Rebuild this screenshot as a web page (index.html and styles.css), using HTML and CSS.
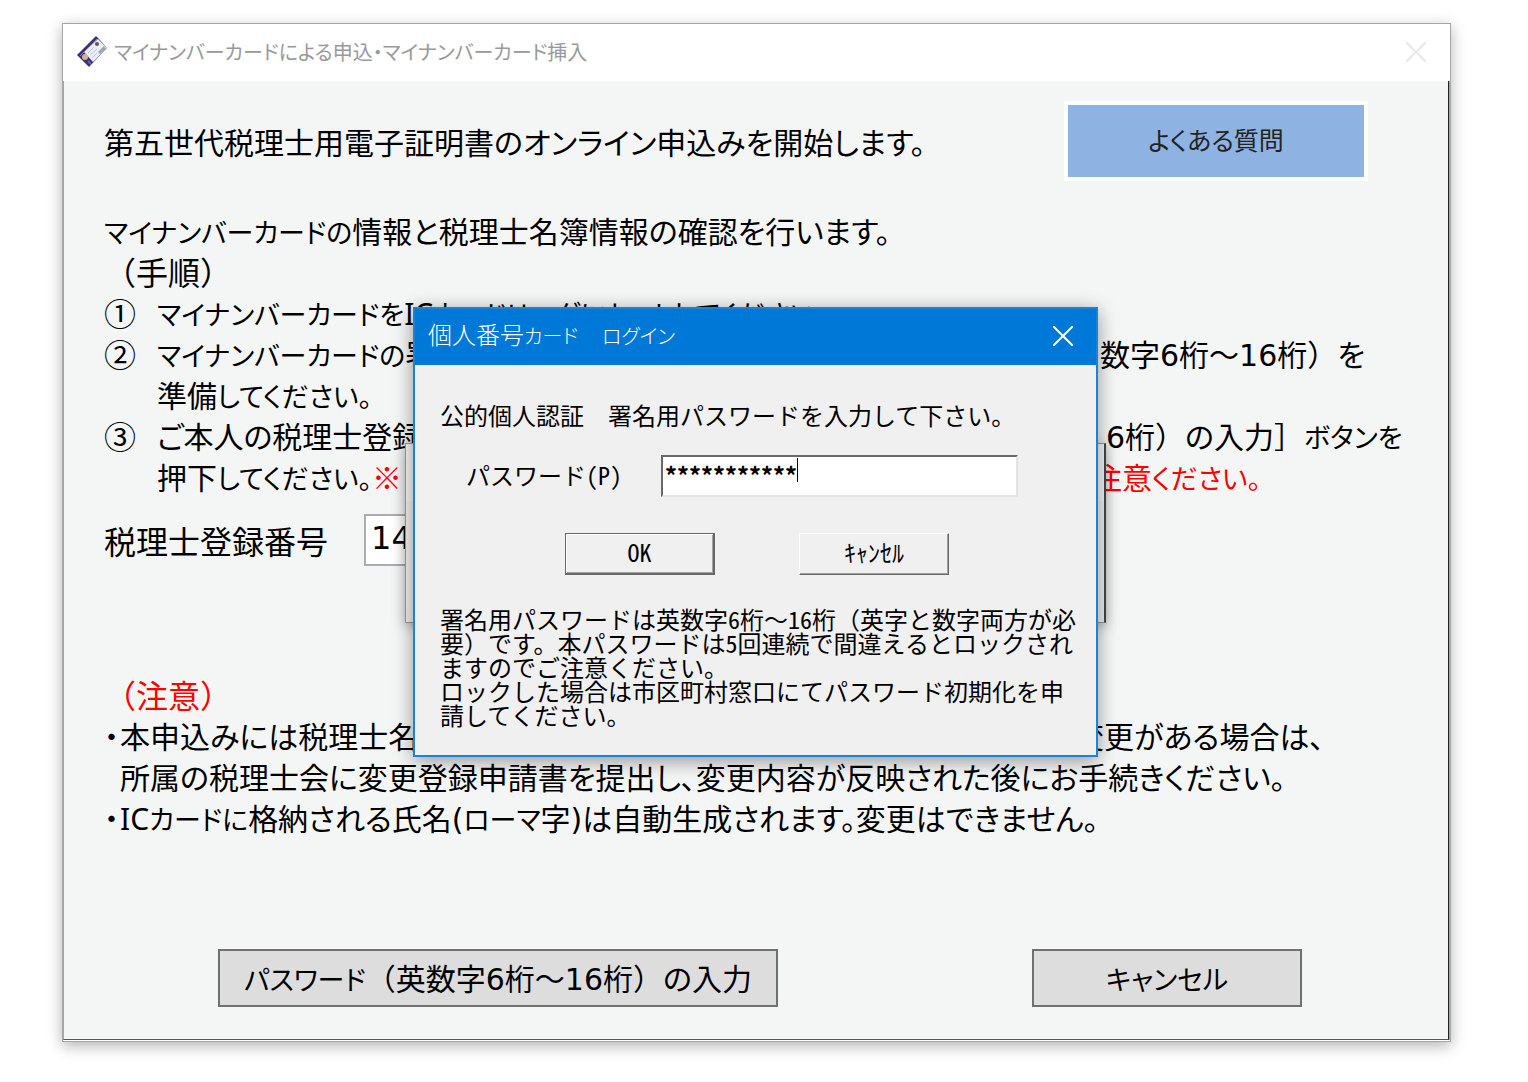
FILE: index.html
```
<!DOCTYPE html>
<html lang="ja">
<head>
    <meta charset="UTF-8">
    <meta name="viewport" content="width=device-width, initial-scale=1.0">
    <title>マイナンバーカードによる申込・マイナンバーカード挿入</title>
    <link rel="stylesheet" href="styles.css">
</head>
<body>
    <div class="window">
        <div class="window-title">
            <svg class="app-icon" width="30" height="32" viewBox="0 0 30 32" aria-hidden="true">
                <path d="M0 19 L19 0 L22 3 L30 12 L12 31 Z" fill="#3c2f7c"/>
                <path d="M7 16 L21 3 L30 12 L16 26 Z" fill="#eaeefa"/>
                <path d="M3 20 L20 3" stroke="#8d84bb" stroke-width="1"/>
                <path d="M11 17 L17 11 M13 19 L20 13 M15 22 L20 17" stroke="#c3c7d6" stroke-width="1"/>
                <path d="M21 16 L27 10 L29 13 L23 18 Z" fill="#a0a3aa"/>
                <circle cx="20" cy="8" r="2" fill="#6b5149"/>
                <circle cx="8" cy="21" r="3" fill="#d6b77c"/>
                <path d="M11 25 L14 28" stroke="#6a62a8" stroke-width="2"/>
            </svg>
            <span class="title-text">マイナンバーカードによる申込・マイナンバーカード挿入</span>
            <button type="button" class="close-btn" aria-label="閉じる">
                <svg width="20" height="20" viewBox="0 0 20 20"><path d="M0 0 L20 20 M20 0 L0 20"/></svg>
            </button>
        </div>

        <div class="window-body">
            <div class="intro">
                <p>第五世代税理士用電子証明書のオンライン申込みを開始します。</p>
                <button type="button" class="faq-btn">よくある質問</button>
            </div>

            <!-- Steps -->
            <p><span class="kana">マイナンバーカードの</span>情報と税理士名簿情報の確認を行います。</p>
            <p class="heading">（手順）</p>
            <div class="steps">
                <div class="line"><span class="mark">①</span><span><span class="kana">マイナンバーカードを</span><span class="ic">IC</span><span class="kana">カードリーダにセットしてください。</span></span></div>
                <div class="line"><span class="mark">②</span><span><span class="kana">マイナンバーカードの</span>署</span><span class="tail">数字<span class="num">6</span>桁～<span class="num">16</span>桁<span class="full">）</span>を</span></div>
                <div class="line"><span class="mark"></span><span>準備<span class="kana">してください。</span></span></div>
                <div class="line"><span class="mark">③</span><span>ご本人の税理士登録</span><span class="tail input-name"><span class="num">6</span>桁<span class="full">）</span>の入力<span class="full">］</span><span class="kana">ボタンを</span></span></div>
                <div class="line"><span class="mark"></span><span>押下<span class="kana">してください。</span><span class="red">※</span></span><span class="tail caution red">注意<span class="kana">ください。</span></span></div>
            </div>

            <div class="number-row">
                <label for="regNumber">税理士登録番号</label>
                <input type="text" id="regNumber" class="num" value="14">
            </div>

            <!-- Notes -->
            <div class="notes">
                <p class="heading red">（注意）</p>
                <div class="line"><span class="dot">・</span><span>本申込みには税理士名</span><span class="tail change">変更がある場合は、</span></div>
                <div class="line"><span class="dot"></span><span>所属の税理士会に変更登録申請書を提出し、変更内容が反映された後にお手続きください。</span></div>
                <div class="line"><span class="dot">・</span><span><span class="ic">IC</span><span class="kana">カードに</span>格納される氏名<span class="num">(</span><span class="kana">ローマ</span>字<span class="num">)</span>は自動生成されます。変更はできません。</span></div>
            </div>

            <div class="actions">
                <button type="button" class="action-btn password"><span class="kana">パスワード</span><span class="full">（</span>英数字<span class="num">6</span>桁～<span class="num">16</span>桁<span class="full">）</span>の入力</button>
                <button type="button" class="action-btn"><span class="kana">キャンセル</span></button>
            </div>
        </div>

        <div class="back-window"><div class="back-title"></div></div>

        <!-- Login dialog -->
        <div class="dialog" role="dialog" aria-labelledby="dialogTitle">
            <div class="dialog-title">
                <span id="dialogTitle"><span>個人番号<span class="kana">カード</span></span><span class="kana">ログイン</span></span>
                <button type="button" class="close-btn light" aria-label="閉じる">
                    <svg width="20" height="20" viewBox="0 0 20 20"><path d="M0 0 L20 20 M20 0 L0 20"/></svg>
                </button>
            </div>
            <form class="dialog-body">
                <p>公的個人認証　署名用パスワードを入力して下さい。</p>
                <div class="field">
                    <label for="password">パスワード<span class="half">(P)</span></label>
                    <div class="input-box">
                        <input type="text" id="password" value="***********">
                        <span class="caret"></span>
                    </div>
                </div>
                <div class="dialog-buttons">
                    <button type="button" class="default half">OK</button>
                    <button type="button">ｷｬﾝｾﾙ</button>
                </div>
                <p>署名用パスワードは英数字<span class="half">6</span>桁～<span class="half">16</span>桁（英字と数字両方が必<br>要）です。本パスワードは<span class="half">5</span>回連続で間違えるとロックされ<br>ますのでご注意ください。<br>ロックした場合は市区町村窓口にてパスワード初期化を申<br>請してください。</p>
            </form>
        </div>
    </div>
</body>
</html>
```
FILE: styles.css
```
* {
    margin: 0;
    padding: 0;
    box-sizing: border-box;
}

body {
    font-family: "Noto Sans CJK JP", sans-serif;
    font-size: 30px;
    font-feature-settings: "palt";
    line-height: 41px;
    color: #000;
    background: #fff;
    padding: 23px 77px 40px 62px;
}

button, input {
    font: inherit;
    font-feature-settings: inherit;
    color: inherit;
}

.window {
    position: relative;
    border: 1px solid #a6a6a6;
    background: #fff;
    box-shadow: 0 4px 14px rgba(0,0,0,0.3);
}

.window-title {
    display: flex;
    align-items: center;
    height: 57px;
    padding: 0 24px 2px 14px;
    color: #999;
}

.title-text {
    flex: 1;
    margin-left: 7px;
    font-size: 20px;
}

.close-btn {
    display: flex;
    border: none;
    background: none;
}

.close-btn svg {
    stroke: #e8e8e8;
    stroke-width: 2;
    fill: none;
}

.close-btn.light svg {
    stroke: #fff;
}

.window-body {
    padding: 20px 0 32px 40px;
    border-left: 1px solid #a6a6a6;
    border-right: 1px solid #222;
    border-bottom: 1px solid #555;
    box-shadow: 1px 0 #a6a6a6;
    margin: 0 1px 1px 0;
    background: #f4f6f5;
    white-space: nowrap;
}

.intro {
    display: flex;
    align-items: center;
    justify-content: space-between;
    margin: 0 80px 29px 0;
}

.intro p, .window-body > p, .line {
    height: 41px;
}

.faq-btn {
    width: 304px;
    height: 80px;
    padding-bottom: 4px;
    border: 4px solid #fff;
    background: #8eb3e3;
    color: #222;
    font-size: 25px;
}

.heading {
    font-size: 32px;
    font-feature-settings: normal;
}

.kana {
    font-size: 27px;
}

.full {
    font-feature-settings: normal;
}

.num {
    font-family: "DejaVu Sans", sans-serif;
}

.ic {
    font-family: "Noto Sans", sans-serif;
}

.red {
    color: #f00;
}

.line {
    display: flex;
    position: relative;
}

.mark {
    width: 53px;
    font-size: 32px;
}

.dot {
    width: 16px;
}

/* end of a line that runs on behind the dialog */
.tail {
    position: absolute;
    left: 996px;
}

.tail.input-name {
    left: 1002px;
}

.tail.caution {
    left: 988px;
}

.tail.change {
    left: 970px;
}

.number-row {
    display: flex;
    align-items: center;
    gap: 36px;
    margin-top: 17px;
    font-size: 32px;
}

.number-row input {
    width: 200px;
    height: 52px;
    padding: 0 5px 4px;
    border: 2px solid #abadb3;
    background: #fff;
}

.notes {
    margin-top: 108px;
}

.actions {
    display: flex;
    justify-content: space-between;
    margin-top: 111px;
    padding: 0 146px 0 114px;
}

.action-btn {
    width: 270px;
    height: 58px;
    border: 2px solid #707070;
    background: #ddd;
}

.action-btn.password {
    width: 560px;
}

.back-window {
    position: absolute;
    top: 419px;
    left: 0;
    right: 2px;
    width: 701px;
    height: 180px;
    margin: 0 auto;
    border: 1px solid #999;
    border-right: 2px solid #444;
    background: #f0f0f0;
    box-shadow: 0 3px 12px rgba(0,0,0,0.3);
}

.back-title {
    height: 57px;
    background: #f6f6f6;
}

.dialog {
    position: absolute;
    top: 283px;
    left: 0;
    right: 2px;
    width: 685px;
    margin: 0 auto;
    border: 2px solid #1883d7;
    background: #f0f0f0;
    box-shadow: 0 4px 18px rgba(0,0,0,0.4);
    font-size: 24px;
    line-height: 24px;
    white-space: nowrap;
}

.dialog-title {
    display: flex;
    align-items: center;
    justify-content: space-between;
    height: 56px;
    padding: 0 23px 2px 13px;
    background: #0078d7;
    color: #fff;
    font-weight: 300;
}

.dialog-title .kana {
    font-size: 20px;
}

#dialogTitle {
    display: flex;
    align-items: baseline;
    gap: 24px;
    padding-bottom: 2px;
}

.dialog-body {
    padding: 38px 20px 28px 25px;
    font-feature-settings: normal;
}

.half, #password {
    font-feature-settings: "hwid";
}

.field {
    display: flex;
    align-items: center;
    margin: 28px 0 36px 26px;
}

.field label {
    width: 195px;
    padding-bottom: 2px;
}

.input-box {
    position: relative;
}

.input-box input {
    display: block;
    width: 357px;
    height: 42px;
    padding: 0 2px 4px;
    border: 2px solid;
    border-color: #696969 #e3e3e3 #e3e3e3 #696969;
    background: #fff;
    font-weight: 700;
}

.caret {
    position: absolute;
    top: 3px;
    left: 136px;
    width: 1px;
    height: 24px;
    background: #000;
}

.dialog-buttons {
    display: flex;
    gap: 84px;
    margin: 0 0 32px 125px;
}

.dialog-buttons button {
    width: 150px;
    height: 42px;
    padding-bottom: 4px;
    border: 1px solid;
    border-color: #fff #696969 #696969 #fff;
    box-shadow: inset -1px -1px #a0a0a0;
    background: #f0f0f0;
}

.dialog-buttons .default {
    border-width: 1px 2px 2px 1px;
    border-color: #696969;
    box-shadow: inset 1px 1px #fff, inset -1px -1px #a0a0a0;
}
```
